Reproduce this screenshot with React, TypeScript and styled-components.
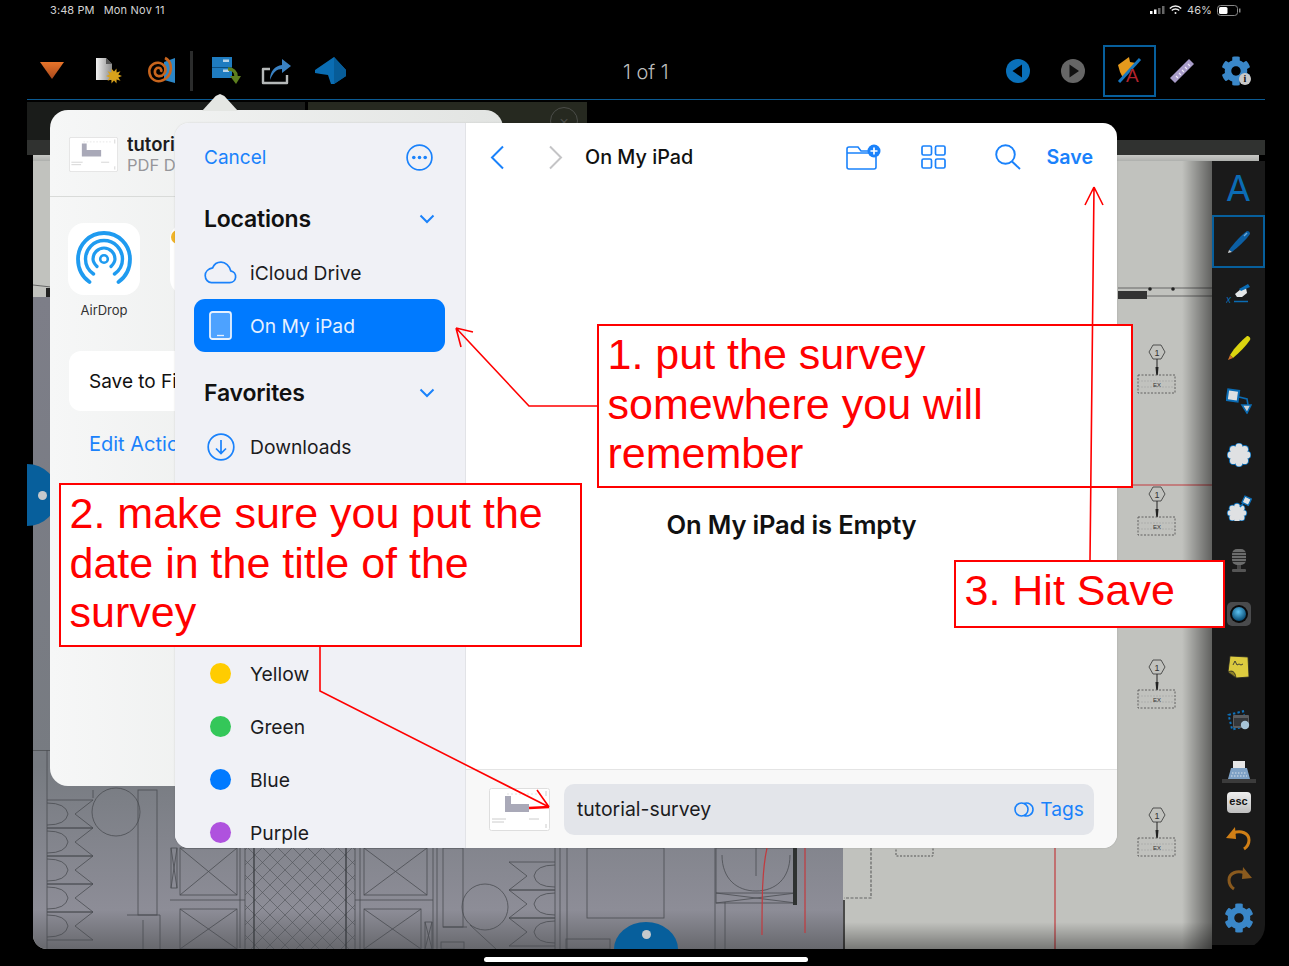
import React from "react";
import styled, { createGlobalStyle } from "styled-components";
import { FaCog } from "react-icons/fa";

const Global = createGlobalStyle`
  html, body { margin: 0; padding: 0; background: #000; }
  body { width: 1289px; height: 966px; overflow: hidden; font-family: Inter, "Noto Sans", "Liberation Sans", sans-serif; }
  * { box-sizing: border-box; }
`;

const BLUE = "#1a82fb";
const ICON = "#0b6cb4";

const Screen = styled.div`
  position: relative; width: 1289px; height: 966px; background: #000; overflow: hidden;
  display: flex; flex-direction: column;
`;
const StatusBar = styled.div`
  height: 20px; display: flex; align-items: center; padding: 0 48px 0 50px;
  color: #d4d4d4; font-size: 11px; letter-spacing: 0.1px;
`;
const StatusDate = styled.span` margin-left: 9px; letter-spacing: 0.2px; `;
const StatusRight = styled.div` margin-left: auto; display: flex; align-items: center; gap: 5px; `;
const SignalBars = styled.svg` margin-right: -2px; `;
const Toolbar = styled.div`
  height: 80px; margin: 0 24px 0 27px; border-bottom: 1px solid #0b5a92;
  display: flex; align-items: center; padding-top: 22px; position: relative;
`;
const ToolSlot = styled.div<{ $w: number }>`
  width: ${p => p.$w}px; height: 52px; flex: none; display: flex; align-items: center; justify-content: center; position: relative;
`;
const ToolSep = styled.div` width: 3px; height: 40px; background: #2b2c2c; flex: none; margin-left: 7px; `;
const PageCount = styled.div`
  position: absolute; left: 596px; top: 25px; bottom: 0; display: flex; align-items: center;
  color: #bdbdbd; font-size: 20px; font-weight: 300;
`;
const ToolRight = styled.div` margin-left: auto; display: flex; align-items: center; padding-right: 1px; `;
const SelectedTool = styled(ToolSlot)` border: 2px solid #075f9c; `;
const InfoBadge = styled.span`
  position: absolute; right: 13px; bottom: 12px; width: 12px; height: 12px; border-radius: 50%;
  background: #c9c9c9; color: #111; font: 700 10px/12px "Liberation Serif", serif; text-align: center;
`;
const TabStrip = styled.div` height: 40px; margin: 0 24px 0 27px; display: flex; gap: 3px; `;
const Tab = styled.div<{ $w: number; $bg: string }>`
  width: ${p => p.$w}px; background: ${p => p.$bg}; margin-top: 2px; display: flex; justify-content: flex-end; padding: 5px 9px 0 0;
`;
const TabClose = styled.div`
  width: 28px; height: 28px; border-radius: 50%; border: 1.5px solid #4b4d49; color: #4b4d49;
  display: flex; align-items: center; justify-content: center; font-size: 16px;
`;
const Ribbon = styled.div` height: 15px; margin: 0 24px 0 27px; background: #303230; `;
const PageCap = styled.div` height: 6px; margin: 0 30px 0 33px; background: linear-gradient(#c7c8c5, #aeb0ad); `;
const Work = styled.div`
  height: 788px; margin: 0 24px 0 33px; display: flex; overflow: hidden; border-radius: 0 0 24px 14px;
`;
const Sheet = styled.svg` display: block; width: 1179px; height: 788px; flex: none; `;
const ToolStrip = styled.div`
  width: 53px; flex: none; height: 784px; background: #1a1a1a; display: flex; flex-direction: column; align-items: center;
`;
const StripCell = styled.div<{ $h: number; $on?: boolean; $end?: boolean }>`
  width: 53px; height: ${p => p.$h}px; flex: none; display: flex; justify-content: center;
  align-items: ${p => p.$end ? "flex-end" : "center"};
  ${p => p.$end ? "padding-bottom: 3px;" : ""}
  ${p => p.$on ? "border: 2px solid #075f9c;" : ""}
`;
const LetterA = styled.span` color: ${ICON}; font: 400 36px/1 Inter, sans-serif; `;
const EscKey = styled.span`
  width: 24px; height: 21px; border-radius: 4px; background: linear-gradient(#efefef, #bdbdbd); color: #111;
  font: 700 11px/18px "Liberation Sans", sans-serif; text-align: center;
`;
const HomeBar = styled.div` width: 324px; height: 5px; border-radius: 3px; background: #fff; margin: 8px 0 0 484px; `;
const DiscLeft = styled.div`
  position: absolute; left: 27px; top: 464px; width: 31px; height: 62px; background: #075f9c; border-radius: 0 31px 31px 0;
  display: flex; align-items: center; justify-content: flex-start; padding-left: 11px;
`;
const DiscBottom = styled.div`
  position: absolute; left: 614px; top: 922px; width: 64px; height: 27px; background: #075f9c; border-radius: 32px 32px 0 0 / 27px 27px 0 0;
  display: flex; justify-content: center; padding-top: 8px;
`;
const DiscDot = styled.span` width: 9px; height: 9px; border-radius: 50%; background: #c5c9cc; `;

/* share sheet */
const ShareSheet = styled.div`
  position: absolute; left: 50px; top: 110px; width: 453px; height: 676px; border-radius: 18px;
  background: linear-gradient(90deg, #f6f7f7, #e2e4e2);
  &::before {
    content: ""; position: absolute; left: 152px; top: -16px; width: 36px; height: 17px; background: #e4e6e3;
    clip-path: polygon(0 100%, 38% 12%, 50% 0, 62% 12%, 100% 100%);
  }
`;
const ShareHead = styled.div`
  height: 87px; border-bottom: 1px solid #d9dbd9; display: flex; align-items: center; padding: 2px 0 0 19px; gap: 9px;
`;
const ShareThumb = styled.svg` width: 49px; height: 35px; flex: none; `;
const ShareText = styled.div` width: 48px; overflow: hidden; flex: none; `;
const ShareName = styled.div` font-size: 18.5px; font-weight: 600; color: #1c1c1e; line-height: 21px; white-space: nowrap; overflow: hidden; `;
const ShareKind = styled.div` font-size: 16.5px; color: #96969a; line-height: 20px; white-space: nowrap; overflow: hidden; `;
const AppRow = styled.div` display: flex; gap: 30px; padding: 26px 0 0 18px; `;
const AppCell = styled.div` width: 72px; display: flex; flex-direction: column; align-items: center; gap: 7px; `;
const AppTile = styled.div`
  width: 72px; height: 72px; border-radius: 16px; background: #fff; display: flex; align-items: center; justify-content: center;
  overflow: hidden;
`;
const AppLabel = styled.div` font-size: 13px; color: #333; line-height: 16px; `;
const FilesCard = styled.div`
  margin: 33px 19px 0; height: 60px; border-radius: 12px; background: #fff; color: #111; font-size: 19px;
  display: flex; align-items: center; padding-left: 20px;
`;
const FilesLabel = styled.span` width: 86px; overflow: hidden; white-space: nowrap; `;
const EditActions = styled.div`
  margin: 21px 0 0 39px; width: 86px; overflow: hidden; white-space: nowrap; font-size: 20px; color: ${BLUE}; line-height: 24px;
`;

/* picker */
const Picker = styled.div`
  position: absolute; left: 175px; top: 123px; width: 942px; height: 725px; border-radius: 14px; overflow: hidden;
  display: flex; background: #fff; box-shadow: 0 0 2px rgba(0,0,0,.15);
`;
const Sidebar = styled.div` width: 291px; flex: none; background: #f0f1f6; border-right: 1px solid #e2e3e7; overflow: hidden; `;
const SideHead = styled.div`
  height: 68px; display: flex; align-items: center; justify-content: space-between; padding: 0 32px 0 29px;
`;
const LinkText = styled.span` color: ${BLUE}; font-size: 19px; `;
const SectionHead = styled.div<{ $first?: boolean }>`
  height: 55px; margin-top: ${p => p.$first ? 0 : 13}px; display: flex; align-items: center; justify-content: space-between;
  padding: 0 30px 0 29px; font-size: 23px; font-weight: 600; color: #111; letter-spacing: -0.2px;
`;
const SideRow = styled.div<{ $on?: boolean }>`
  height: 53px; margin: 0 20px 0 19px; padding-left: 10px; border-radius: 11px; display: flex; align-items: center; gap: 13px;
  font-size: 19.3px; color: ${p => p.$on ? "#e6f1ff" : "#1c1c1e"}; background: ${p => p.$on ? "#007aff" : "transparent"};
`;
const CoveredRows = styled.div` height: 174px; `;
const RowIcon = styled.span` width: 33px; flex: none; display: flex; justify-content: center; align-items: center; `;
const Dot = styled.span<{ $c: string }>` width: 21px; height: 21px; border-radius: 50%; background: ${p => p.$c}; `;
const Main = styled.div` flex: 1; display: flex; flex-direction: column; min-width: 0; `;
const MainHead = styled.div` height: 68px; flex: none; display: flex; align-items: center; padding: 0 24px 0 24px; `;
const HeadIcon = styled.span<{ $gap: number }>` margin-left: ${p => p.$gap}px; display: flex; flex: none; `;
const Title = styled.span` margin-left: 22px; font-size: 19.8px; font-weight: 500; color: #111; `;
const HeadRight = styled.div` margin-left: auto; display: flex; align-items: center; `;
const SaveLink = styled.span` margin-left: 26px; color: ${BLUE}; font-size: 19.6px; font-weight: 600; `;
const MainBody = styled.div`
  flex: 1; display: flex; justify-content: center; align-items: center; padding-top: 88px;
  font-size: 25.6px; font-weight: 600; color: #111; letter-spacing: -0.2px;
`;
const MainFoot = styled.div`
  height: 79px; flex: none; background: #f8f8f8; border-top: 1px solid #e4e4e4; display: flex; align-items: center; padding: 0 23px 0 23px; gap: 14px;
`;
const FootThumb = styled.svg` width: 61px; height: 43px; flex: none; `;
const NameField = styled.div`
  flex: 1; height: 51px; border-radius: 10px; background: #e3e5ea; display: flex; align-items: center; padding: 0 10px 0 13px;
  font-size: 19.4px; color: #1c1c1e; justify-content: space-between;
`;
const TagsLink = styled.span` display: flex; align-items: center; gap: 5px; color: ${BLUE}; font-size: 19.2px; `;

/* annotation */
const Callout = styled.div<{ $l: number; $t: number; $w: number; $h: number }>`
  position: absolute; left: ${p => p.$l}px; top: ${p => p.$t}px; width: ${p => p.$w}px; height: ${p => p.$h}px;
  background: #fff; border: 2px solid #ff0000; color: #ff0000; padding: 4px 8.500px;
  font: 400 43px/49.6px "Liberation Sans", Arial, sans-serif;
`;
const ArrowLayer = styled.svg` position: absolute; left: 0; top: 0; width: 1289px; height: 966px; pointer-events: none; `;

/* ---------- drawings ---------- */
const burst = (cx: number, cy: number, r1: number, r2: number, n: number) => {
  const pts: string[] = [];
  for (let i = 0; i < n * 2; i++) {
    const r = i % 2 ? r2 : r1; const a = (Math.PI * i) / n;
    pts.push(`${(cx + r * Math.cos(a)).toFixed(1)},${(cy + r * Math.sin(a)).toFixed(1)}`);
  }
  return pts.join(" ");
};

const Triangle = () => (
  <svg width="24" height="17" viewBox="0 0 24 17">
    <defs><linearGradient id="tri" x1="0" y1="0" x2="0" y2="1"><stop offset="0" stopColor="#e8752a" /><stop offset="1" stopColor="#a8481c" /></linearGradient></defs>
    <polygon points="0,0 24,0 12,17" fill="url(#tri)" />
  </svg>
);
const NewDoc = () => (
  <svg width="28" height="28" viewBox="0 0 28 28">
    <defs><linearGradient id="doc" x1="0" y1="0" x2="1" y2="0"><stop offset="0" stopColor="#f1f1f1" /><stop offset="1" stopColor="#8d8d8d" /></linearGradient></defs>
    <path d="M1 1h10l6 6v16H1z" fill="url(#doc)" />
    <path d="M11 1l6 6h-6z" fill="#555" />
    <polygon points={burst(19, 19, 8, 4.5, 10)} fill="#d9a21b" />
  </svg>
);
const Spiral = () => (
  <svg width="30" height="30" viewBox="0 0 30 30">
    <path d="M17 6l11-4v25l-11-3z" fill="#2c86c6" />
    <path d="M18 2C24 5 25 12 23 17 20 24 12 27 7 24 2 21 1 14 4 10 8 5 15 6 18 11 20 16 16 21 11 20 7 19 7 14 10 12 13 11 15 13 14 16" fill="none" stroke="#c8651d" strokeWidth="2.600" />
  </svg>
);
const Cabinet = () => (
  <svg width="30" height="30" viewBox="0 0 30 30">
    <rect x="1" y="1" width="20" height="21" fill="#1f7cc0" />
    <rect x="1" y="11" width="20" height="1" fill="#0c4f80" />
    <rect x="12" y="3.5" width="6" height="2.5" fill="#b7d3e8" />
    <rect x="12" y="13.5" width="6" height="2.5" fill="#b7d3e8" />
    <path d="M17 13 C22 13 25 16 25 20" fill="none" stroke="#5d7f1e" strokeWidth="3.5" />
    <polygon points="19,20 30,20 25,28" fill="#5d7f1e" />
  </svg>
);
const ShareOut = () => (
  <svg width="32" height="28" viewBox="0 0 32 28">
    <path d="M9 12H2v14h24v-8" fill="none" stroke="#b5b8b8" strokeWidth="2.4" strokeLinejoin="round" />
    <path d="M9 23C9 14 14 9 21 8V2l9 7-9 7v-4c-5 0-9 3-12 11z" fill="#3a82c4" />
  </svg>
);
const House = () => (
  <svg width="32" height="28" viewBox="0 0 32 28">
    <path d="M0 13L19 0 31 13V19L19 27H16L13 18 6 17 0 16Z" fill="#0a6db3" />
    <path d="M19 0L31 13V19L19 27Z" fill="#075c98" />
  </svg>
);
const Round = ({ c, back }: { c: string; back?: boolean }) => (
  <svg width="24" height="24" viewBox="0 0 24 24">
    <circle cx="12" cy="12" r="12" fill={c} />
    <polygon points={back ? "16,5.5 16,18.5 6.5,12" : "8.5,5.5 8.5,18.5 18,12"} fill={back ? "#000" : "#111"} />
  </svg>
);
const ArrowPenA = () => (
  <svg width="26" height="30" viewBox="0 0 26 30">
    <path d="M1 9l11-8 1 5 6 1-13 15-3-6z" fill="#e59a1d" />
    <path d="M2 26L23 3" stroke="#1678c2" strokeWidth="3" />
    <text x="9" y="26" fontSize="19" fontFamily="Liberation Sans" fill="#b2232d">A</text>
  </svg>
);
const Ruler = () => (
  <svg width="26" height="26" viewBox="0 0 26 26">
    <path d="M1 20L20 1l5 5L6 25z" fill="#a89cc8" />
    <path d="M7 18l2 2M10 15l2 2M13 12l2 2M16 9l2 2M19 6l2 2" stroke="#efeaf7" strokeWidth="1.2" />
  </svg>
);
const Pen = () => (
  <svg width="26" height="26" viewBox="0 0 26 26">
    <path d="M3 21C8 14 15 6 21 2c2 0 3 1 3 3-4 6-12 13-18 18z" fill="#0c5fa4" />
    <path d="M3 21l-1 3 4-1z" fill="#cfd3d6" />
    <path d="M18 7l3-3" stroke="#6fa9d6" strokeWidth="1.5" />
  </svg>
);
const Sign = () => (
  <svg width="26" height="22" viewBox="0 0 26 22">
    <text x="0" y="19" fontSize="10" fontStyle="italic" fontFamily="Liberation Sans" fill={ICON}>x</text>
    <path d="M8 17.5h14" stroke={ICON} strokeWidth="1.5" />
    <path d="M9 10l6-5 5-1 1 5-5 4-5 0z" fill="#e5e7e8" />
    <path d="M13 5l9-5 2 3-9 4z" fill={ICON} />
  </svg>
);
const Highlighter = () => (
  <svg width="24" height="26" viewBox="0 0 24 26">
    <path d="M3 20C8 12 14 6 20 1c2 0 4 2 3 4-4 6-10 12-17 18z" fill="#dcd50f" />
    <path d="M3 20l-2 5 5-2z" fill="#d2752a" />
  </svg>
);
const Shapes = () => (
  <svg width="26" height="26" viewBox="0 0 26 26">
    <rect x="1.5" y="2" width="11" height="11" fill="#dde0e2" stroke={ICON} strokeWidth="2" transform="rotate(8 7 7)" />
    <path d="M13 9l8 2 1 6" fill="none" stroke={ICON} strokeWidth="1.6" />
    <polygon points="16,17 25,17 21,25" fill="#cfd3d6" stroke={ICON} strokeWidth="1.6" />
  </svg>
);
const Blob = ({ r = 1 }: { r?: number }) => {
  const cs = Array.from({ length: 8 }, (_, i) => [12 + 8 * r * Math.cos((i * Math.PI) / 4), 12 + 8 * r * Math.sin((i * Math.PI) / 4)]);
  return (
    <g>
      {cs.map(([x, y], i) => <circle key={i} cx={x} cy={y} r={4.4 * r} fill={ICON} />)}
      {cs.map(([x, y], i) => <circle key={"w" + i} cx={x} cy={y} r={3.4 * r} fill="#dfe1e3" />)}
      <circle cx="12" cy="12" r={8 * r} fill="#dfe1e3" />
    </g>
  );
};
const Cloudy = () => <svg width="24" height="24" viewBox="0 0 24 24"><Blob /></svg>;
const CloudyPlus = () => (
  <svg width="26" height="26" viewBox="0 0 26 26">
    <g transform="translate(-1 6)"><Blob r={0.82} /></g>
    <path d="M14 12l6-7" stroke={ICON} strokeWidth="1.5" />
    <rect x="17" y="2" width="7" height="7" fill="#dfe1e3" stroke={ICON} strokeWidth="1.4" transform="rotate(25 20 6)" />
  </svg>
);
const Mic = () => (
  <svg width="20" height="24" viewBox="0 0 20 24">
    <rect x="3" y="0" width="14" height="16" rx="5" fill="#6b6c6c" />
    <path d="M3 3.500h14M3 6.500h14M3 9.500h14M3 12.500h14" stroke="#2a2a2a" strokeWidth="1" />
    <rect x="8" y="16" width="4" height="4" fill="#474747" />
    <rect x="3" y="20" width="14" height="3" rx="1" fill="#555" />
  </svg>
);
const CameraLens = () => (
  <svg width="24" height="24" viewBox="0 0 24 24">
    <defs><radialGradient id="lens" cx=".45" cy=".35" r=".65"><stop offset="0" stopColor="#5cc2f2" /><stop offset="1" stopColor="#07486f" /></radialGradient></defs>
    <rect width="24" height="24" rx="5" fill="#4a4b4d" />
    <circle cx="12" cy="12" r="9" fill="#0a0a0a" />
    <circle cx="12" cy="12" r="7" fill="url(#lens)" />
  </svg>
);
const StickyNote = () => (
  <svg width="24" height="24" viewBox="0 0 24 24">
    <path d="M3 1l18 1 1 20-13 1-8-6z" fill="#dccb3f" stroke="#222" strokeWidth="0.8" />
    <path d="M1 17c4-2 7-1 8 6-3-3-6-4-8-6z" fill="#8f8226" stroke="#222" strokeWidth="0.8" />
    <path d="M6 10l2-4 2 4 2-1 2 1 2-1" fill="none" stroke="#333" strokeWidth="0.9" />
  </svg>
);
const ImageTool = () => (
  <svg width="24" height="22" viewBox="0 0 24 22">
    <rect x="3" y="3" width="15" height="15" fill="none" stroke="#0f73bd" strokeWidth="2" strokeDasharray="2.4 2.2" transform="rotate(-14 10 10)" />
    <rect x="6" y="5" width="16" height="13" rx="1" fill="#5b5d60" />
    <rect x="7" y="8" width="14" height="8" fill="#35373a" />
    <circle cx="18" cy="15" r="4.2" fill="#a6c3d6" />
  </svg>
);
const Typewriter = () => (
  <svg width="34" height="22" viewBox="0 0 34 22">
    <rect x="11" y="0" width="12" height="9" fill="#e6e6e6" />
    <path d="M9 7h16l3 11H6z" fill="#7ea1c5" />
    <path d="M10 12h14M9 15h16" stroke="#d8e2ec" strokeWidth="1" strokeDasharray="1.5 1.5" />
    <rect x="0" y="18" width="34" height="4" fill="#3b3b3b" />
  </svg>
);
const Undo = ({ c, flip }: { c: string; flip?: boolean }) => (
  <svg width="26" height="24" viewBox="0 0 26 24" style={flip ? { transform: "scaleX(-1)" } : undefined}>
    <path d="M7 6C15 3 23 6 23 13c0 4-2 7-5 9" fill="none" stroke={c} strokeWidth="3" />
    <polygon points="0,11 9,0 10,12" fill={c} />
  </svg>
);
const Gear = styled(FaCog)` color: #3a87c8; `;

const Cloud = () => (
  <svg width="33" height="23" viewBox="0 0 33 23">
    <path d="M7.5 21.7h18a6 6 0 0 0 1.2-11.9C25.5 4.7 21.5 1.2 17 1.2c-3.8 0-7 2.3-8.4 5.7C4.4 7.7 1.2 10.7 1.2 14.5c0 4 3 7.2 6.3 7.2z" fill="none" stroke={BLUE} strokeWidth="1.7" />
  </svg>
);
const Ipad = () => (
  <svg width="23" height="29" viewBox="0 0 23 29">
    <rect x="1" y="1" width="21" height="27" rx="2.5" fill="#4da2ff" stroke="#e6f1ff" strokeWidth="1.8" />
    <path d="M8 24.5h7" stroke="#e6f1ff" strokeWidth="1.3" />
  </svg>
);
const DownloadCircle = () => (
  <svg width="28" height="28" viewBox="0 0 28 28" fill="none" stroke={BLUE} strokeWidth="1.7">
    <circle cx="14" cy="14" r="12.8" />
    <path d="M14 7v13M9 15.5l5 5 5-5" />
  </svg>
);
const Ellipsis = () => (
  <svg width="27" height="27" viewBox="0 0 27 27">
    <circle cx="13.5" cy="13.5" r="12.4" fill="none" stroke={BLUE} strokeWidth="1.7" />
    <circle cx="7.8" cy="13.5" r="1.8" fill={BLUE} /><circle cx="13.5" cy="13.5" r="1.8" fill={BLUE} /><circle cx="19.2" cy="13.5" r="1.8" fill={BLUE} />
  </svg>
);
const ChevronDown = () => (
  <svg width="16" height="10" viewBox="0 0 16 10"><path d="M1.5 1.5L8 8l6.5-6.5" fill="none" stroke={BLUE} strokeWidth="2" /></svg>
);
const Chevron = ({ c, right }: { c: string; right?: boolean }) => (
  <svg width="15" height="25" viewBox="0 0 15 25"><path d={right ? "M2 1.5L13 12.5 2 23.5" : "M13 1.5L2 12.5 13 23.5"} fill="none" stroke={c} strokeWidth="2" /></svg>
);
const FolderPlus = () => (
  <svg width="35" height="26" viewBox="0 0 35 26">
    <path d="M1 5a2 2 0 0 1 2-2h9l3 4h12M1 9h26M1 5v18a2 2 0 0 0 2 2h25a2 2 0 0 0 2-2V13" fill="none" stroke={BLUE} strokeWidth="1.6" />
    <circle cx="28" cy="7" r="6.5" fill={BLUE} />
    <path d="M28 3.5v7M24.5 7h7" stroke="#fff" strokeWidth="1.7" />
  </svg>
);
const GridIcon = () => (
  <svg width="25" height="24" viewBox="0 0 25 24" fill="none" stroke={BLUE} strokeWidth="1.7">
    <rect x="1" y="1" width="9.5" height="9" rx="1.5" /><rect x="14.5" y="1" width="9.5" height="9" rx="1.5" />
    <rect x="1" y="14" width="9.5" height="9" rx="1.5" /><rect x="14.5" y="14" width="9.5" height="9" rx="1.5" />
  </svg>
);
const Search = () => (
  <svg width="26" height="26" viewBox="0 0 26 26" fill="none" stroke={BLUE} strokeWidth="1.9">
    <circle cx="10.5" cy="10.5" r="9.3" /><path d="M17 17.5l8 7.5" />
  </svg>
);
const TagsIcon = () => (
  <svg width="21" height="15" viewBox="0 0 21 15" fill="none" stroke={BLUE} strokeWidth="1.6">
    <circle cx="7.5" cy="7.5" r="6.5" /><path d="M10 1.5a6.5 6.5 0 1 1 0 12" />
  </svg>
);
const AirDropIcon = () => (
  <svg width="56" height="56" viewBox="0 0 56 56" fill="none" stroke="#1f9bf0" strokeLinecap="round">
    <path d="M13.500 51C6.500 46 2 37.500 2 28 2 13.600 13.600 2 28 2s26 11.600 26 26c0 9.500-4.500 18-11.500 23" strokeWidth="3.800" />
    <path d="M17.500 43C12.500 39.500 9.500 34 9.500 28 9.500 17.800 17.800 9.500 28 9.500S46.500 17.800 46.500 28c0 6-3 11.500-8 15" strokeWidth="3.400" />
    <path d="M21 35.500C18.500 33 17 30.700 17 28c0-6 5-11 11-11s11 5 11 11c0 2.700-1.500 5-4 7.500" strokeWidth="3.200" />
    <circle cx="28" cy="28" r="3.800" strokeWidth="2.600" />
  </svg>
);
const Thumb = () => (
  <>
    <rect x="0.5" y="0.5" width="60" height="42" rx="2" fill="#fff" stroke="#dedede" />
    <path d="M16 8h6v8h18v8H16z" fill="#a9a9b8" />
    <path d="M3 31h14M3 34h12M40 31h10M57 3v5M57 36v4" stroke="#ccc" strokeWidth="1" />
    <path d="M18 6h34" stroke="#e2e2e2" strokeWidth="1" strokeDasharray="2 2" />
  </>
);

/* plan symbol used on the free canvas of the drawing */
const ExMark = ({ y, x = 1157 }: { y: number; x?: number }) => (
  <g transform={`translate(${x} ${y})`}>
    <polygon points="-8,0 -4,-7 4,-7 8,0 4,7 -4,7" fill="none" stroke="#333" strokeWidth=".8" />
    <text x="0" y="3.5" textAnchor="middle" fontSize="9" fontFamily="Liberation Sans" fill="#333">1</text>
    <path d="M0 7v8" stroke="#222" /><polygon points="-1.500,15 1.500,15 .8,23 -.8,23" fill="#222" />
    <rect x="-19" y="23" width="37" height="18" fill="none" stroke="#555" strokeWidth=".9" strokeDasharray="2 1.500" />
    <path d="M-19 29h37M-19 35h37" stroke="#999" strokeWidth=".5" strokeDasharray="2 1" />
    <text x="0" y="35" textAnchor="middle" fontSize="6" fontFamily="Liberation Sans" fill="#333">EX</text>
  </g>
);
const Fixture = ({ y, flip }: { y: number; flip?: boolean }) => (
  <g transform={flip ? `translate(602 ${y}) scale(-1 1)` : `translate(0 ${y})`}>
    <path d="M47 0h46L75 14l18 14H47" fill="none" />
    <path d="M47 3Q66 3 68 14 66 25 47 25" fill="none" />
  </g>
);
const XBox = ({ x, y, w, h }: { x: number; y: number; w: number; h: number }) => (
  <g>
    <rect x={x} y={y} width={w} height={h} fill="none" />
    <path d={`M${x} ${y}L${x + w} ${y + h}M${x + w} ${y}L${x} ${y + h}`} />
  </g>
);
const Plan = () => (
  <Sheet viewBox="33 161 1179 788">
    <defs>
      <linearGradient id="plan" x1="0" y1="297" x2="0" y2="949" gradientUnits="userSpaceOnUse">
        <stop offset="0" stopColor="#7d7e88" /><stop offset=".72" stopColor="#777b81" /><stop offset=".94" stopColor="#8d8d97" /><stop offset="1" stopColor="#67686d" />
      </linearGradient>
      <linearGradient id="edge" x1="0" y1="0" x2="1" y2="0"><stop offset="0" stopColor="#000" stopOpacity="0" /><stop offset="1" stopColor="#000" stopOpacity=".5" /></linearGradient>
      <linearGradient id="foot" x1="0" y1="0" x2="0" y2="1"><stop offset="0" stopColor="#000" stopOpacity="0" /><stop offset="1" stopColor="#000" stopOpacity=".38" /></linearGradient>
      <pattern id="hatch" width="15" height="15" patternUnits="userSpaceOnUse">
        <path d="M0 0L15 15M15 0L0 15" stroke="#4e5156" strokeWidth=".6" />
      </pattern>
    </defs>
    <rect x="33" y="161" width="1179" height="788" fill="#c1c2be" />
    <rect x="33" y="297" width="810" height="652" fill="url(#plan)" />
    <path d="M33 285l18 2v10M1118 288h94M1118 296h94" stroke="#666" strokeWidth="1" fill="none" />
    <rect x="46" y="288" width="5" height="9" fill="#222" />
    <rect x="1118" y="291" width="29" height="8" fill="#333" />
    <circle cx="1150" cy="289" r="1.800" fill="#222" /><circle cx="1173" cy="289" r="1.800" fill="#222" />
    <rect x="33" y="750" width="810" height="1" fill="#55585c" />
    <g stroke="#4a4d52" strokeWidth=".8" fill="none">
      {[800, 828, 856, 884, 912].map(y => <Fixture key={y} y={y} />)}
      {[862, 890, 918].map(y => <Fixture key={y} y={y} flip />)}
      <path d="M47 750v199M93 790v8" />
      <circle cx="116" cy="812" r="24" />
      <rect x="138" y="790" width="19" height="125" />
      <path d="M127 915h33v34M143 920v29" />
      <XBox x={180} y={848} w={57} h={47} />
      <XBox x={180} y={909} w={57} h={40} />
      <XBox x={171} y={848} w={6} h={40} />
      <XBox x={364} y={848} w={63} h={47} />
      <XBox x={364} y={909} w={57} h={40} />
      <XBox x={425} y={922} w={7} h={27} />
      <path d="M170 900h75M355 900h78M240 848v100M245 848v101M355 848v101M360 848v101M433 848v101M437 848v101" />
      <rect x="245" y="848" width="110" height="101" fill="url(#hatch)" stroke="none" />
      <rect x="443" y="848" width="20" height="79" />
      <path d="M443 927h24" />
      <circle cx="485" cy="907" r="23" />
      <path d="M470 925l26 24" />
      <rect x="441" y="942" width="23" height="7" />
      <path d="M555 848v101M567 848v101M560 848v101M715 848v101M725 902v47" />
      <rect x="587" y="848" width="77" height="70" />
      <rect x="566" y="939" width="44" height="10" />
      <rect x="716" y="848" width="80" height="55" />
      <path d="M722 855c0 24 15 36 34 36s34-12 34-36M716 893h80M716 893l80 10M796 893l-80 10" />
      <path d="M756 848v28" />
    </g>
    <path d="M254 848v101M346 848v101" stroke="#33363a" strokeWidth="1.200" />
    <rect x="793" y="848" width="4" height="57" fill="#2f3231" />
    <path d="M767 848C762 870 762 900 762 935M805 848V933" stroke="#c23a3e" strokeWidth="1.200" fill="none" />
    <path d="M1055 848v101M1132 485h80" stroke="#c23a3e" strokeWidth="1.200" fill="none" />
    <path d="M871 848v50h-27" fill="none" stroke="#666" strokeWidth="1.200" strokeDasharray="3 1.500" />
    <rect x="896" y="840" width="37" height="16" fill="none" stroke="#555" strokeDasharray="2 1.500" />
    <path d="M844 900v49" stroke="#222" strokeWidth="1.500" />
    <ExMark y={352} /><ExMark y={494} /><ExMark y={667} /><ExMark y={815} />
    <rect x="1182" y="161" width="30" height="788" fill="url(#edge)" />
    <rect x="843" y="922" width="369" height="27" fill="url(#foot)" />
  </Sheet>
);

const rows = [["#ffcc00", "Yellow"], ["#34c759", "Green"], ["#007aff", "Blue"], ["#af52de", "Purple"]];

export default function App() {
  return (
    <Screen>
      <Global />
      <StatusBar>
        <span>3:48 PM</span><StatusDate>Mon Nov 11</StatusDate>
        <StatusRight>
          <SignalBars width="16" height="8" viewBox="0 0 16 8">
            <rect x="0" y="5" width="2.500" height="3" fill="#fff" /><rect x="4" y="3.500" width="2.500" height="4.500" fill="#fff" />
            <rect x="8" y="2" width="2.500" height="6" fill="#666" /><rect x="12" y="0" width="2.500" height="8" fill="#666" />
          </SignalBars>
          <svg width="13" height="10" viewBox="0 0 13 10" fill="none" stroke="#eee" strokeWidth="1.500">
            <path d="M.8 3.500a8 8 0 0 1 11.400 0M2.800 5.600a5 5 0 0 1 7.400 0" /><circle cx="6.500" cy="8" r="1" fill="#eee" stroke="none" />
          </svg>
          <span>46%</span>
          <svg width="24" height="11" viewBox="0 0 24 11">
            <rect x=".5" y=".5" width="20" height="10" rx="3" fill="none" stroke="#888" />
            <rect x="2" y="2" width="8.500" height="7" rx="1.500" fill="#fff" /><rect x="22" y="3.500" width="1.500" height="4" fill="#888" />
          </svg>
        </StatusRight>
      </StatusBar>
      <Toolbar>
        <ToolSlot $w={50}><Triangle /></ToolSlot>
        <ToolSlot $w={64}><NewDoc /></ToolSlot>
        <ToolSlot $w={42}><Spiral /></ToolSlot>
        <ToolSep />
        <ToolSlot $w={66}><Cabinet /></ToolSlot>
        <ToolSlot $w={36}><ShareOut /></ToolSlot>
        <ToolSlot $w={72}><House /></ToolSlot>
        <PageCount>1 of 1</PageCount>
        <ToolRight>
          <ToolSlot $w={50}><Round c="#0a71bb" back /></ToolSlot>
          <ToolSlot $w={60}><Round c="#666" /></ToolSlot>
          <SelectedTool $w={53}><ArrowPenA /></SelectedTool>
          <ToolSlot $w={52}><Ruler /></ToolSlot>
          <ToolSlot $w={56}><Gear size={30} /><InfoBadge>i</InfoBadge></ToolSlot>
        </ToolRight>
      </Toolbar>
      <TabStrip>
        <Tab $w={278} $bg="#1a1c1a" />
        <Tab $w={279} $bg="#262920"><TabClose>×</TabClose></Tab>
      </TabStrip>
      <Ribbon />
      <PageCap />
      <Work>
        <Plan />
        <ToolStrip>
          <StripCell $h={54}><LetterA>A</LetterA></StripCell>
          <StripCell $h={53} $on><Pen /></StripCell>
          <StripCell $h={53}><Sign /></StripCell>
          <StripCell $h={53}><Highlighter /></StripCell>
          <StripCell $h={54}><Shapes /></StripCell>
          <StripCell $h={53}><Cloudy /></StripCell>
          <StripCell $h={53}><CloudyPlus /></StripCell>
          <StripCell $h={53}><Mic /></StripCell>
          <StripCell $h={53}><CameraLens /></StripCell>
          <StripCell $h={54}><StickyNote /></StripCell>
          <StripCell $h={54}><ImageTool /></StripCell>
          <StripCell $h={38} $end><Typewriter /></StripCell>
          <StripCell $h={32}><EscKey>esc</EscKey></StripCell>
          <StripCell $h={42}><Undo c="#d07f16" /></StripCell>
          <StripCell $h={38}><Undo c="#8a5a1e" flip /></StripCell>
          <StripCell $h={40}><Gear size={30} /></StripCell>
        </ToolStrip>
      </Work>
      <HomeBar />

      <DiscBottom><DiscDot /></DiscBottom>
      <DiscLeft><DiscDot /></DiscLeft>

      <ShareSheet>
        <ShareHead>
          <ShareThumb viewBox="0 0 61 43" preserveAspectRatio="none"><Thumb /></ShareThumb>
          <ShareText><ShareName>tutorial-survey</ShareName><ShareKind>PDF Document</ShareKind></ShareText>
        </ShareHead>
        <AppRow>
          <AppCell><AppTile><AirDropIcon /></AppTile><AppLabel>AirDrop</AppLabel></AppCell>
          <AppCell>
            <AppTile>
              <svg width="72" height="72" viewBox="0 0 72 72"><circle cx="8" cy="14" r="7" fill="#f0b429" /></svg>
            </AppTile>
          </AppCell>
        </AppRow>
        <FilesCard><FilesLabel>Save to Files</FilesLabel></FilesCard>
        <EditActions>Edit Actions…</EditActions>
      </ShareSheet>

      <Picker>
        <Sidebar>
          <SideHead><LinkText>Cancel</LinkText><Ellipsis /></SideHead>
          <SectionHead $first>Locations<ChevronDown /></SectionHead>
          <SideRow><RowIcon><Cloud /></RowIcon>iCloud Drive</SideRow>
          <SideRow $on><RowIcon><Ipad /></RowIcon>On My iPad</SideRow>
          <SectionHead>Favorites<ChevronDown /></SectionHead>
          <SideRow><RowIcon><DownloadCircle /></RowIcon>Downloads</SideRow>
          <CoveredRows />
          {rows.map(([c, n]) => <SideRow key={n}><RowIcon><Dot $c={c} /></RowIcon>{n}</SideRow>)}
        </Sidebar>
        <Main>
          <MainHead>
            <Chevron c={BLUE} />
            <HeadIcon $gap={43}><Chevron c="#c4c4c6" right /></HeadIcon>
            <Title>On My iPad</Title>
            <HeadRight>
              <HeadIcon $gap={0}><FolderPlus /></HeadIcon>
              <HeadIcon $gap={40}><GridIcon /></HeadIcon>
              <HeadIcon $gap={49}><Search /></HeadIcon>
              <SaveLink>Save</SaveLink>
            </HeadRight>
          </MainHead>
          <MainBody>On My iPad is Empty</MainBody>
          <MainFoot>
            <FootThumb viewBox="0 0 61 43"><Thumb /></FootThumb>
            <NameField>tutorial-survey<TagsLink><TagsIcon />Tags</TagsLink></NameField>
          </MainFoot>
        </Main>
      </Picker>

      <Callout $l={597} $t={324} $w={536} $h={164}>1. put the survey<br />somewhere you will<br />remember</Callout>
      <Callout $l={59} $t={483} $w={523} $h={164}>2. make sure you put the<br />date in the title of the<br />survey</Callout>
      <Callout $l={954} $t={560} $w={271} $h={68}>3. Hit Save</Callout>

      <ArrowLayer viewBox="0 0 1289 966" fill="none" stroke="#ff0000" strokeWidth="1.600">
        <path d="M597 406H529L456 328M456 328L473 332M456 328L461 347" />
        <path d="M320 647V691L549 807M549 807L537 790" />
        <path d="M529 808L549 807" strokeWidth="2.500" />
        <path d="M1090 561L1094 187M1094 187L1085 205M1094 187L1103 205" />
      </ArrowLayer>
    </Screen>
  );
}
